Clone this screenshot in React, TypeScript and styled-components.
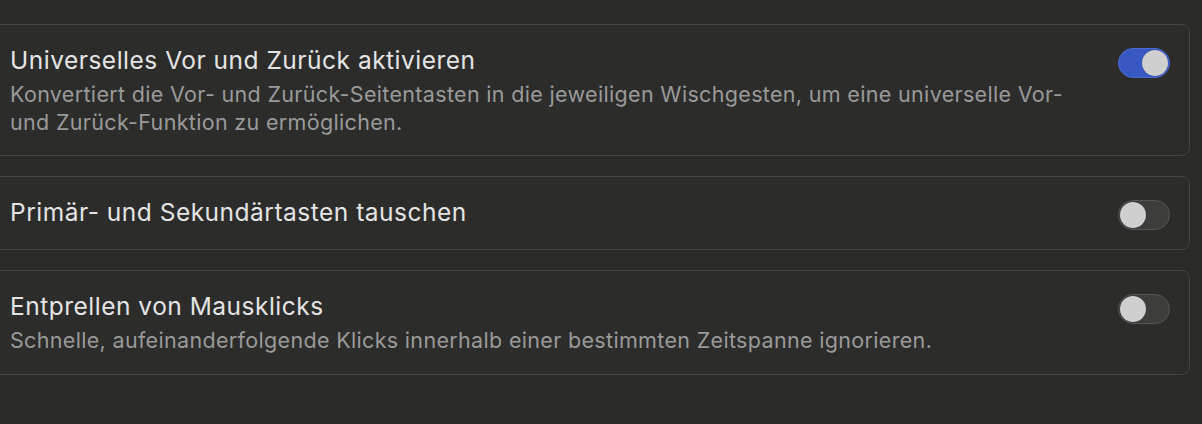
import React, { useState } from "react";
import styled, { createGlobalStyle } from "styled-components";

const Global = createGlobalStyle`
  html, body { margin: 0; padding: 0; background: #2a2a29; }
  body { font-family: Inter, "Noto Sans", "Liberation Sans", sans-serif; -webkit-font-smoothing: antialiased; }
`;

const Page = styled.div`
  width: 1202px;
  height: 424px;
  overflow: hidden;
  background: #2a2a29;
`;

const List = styled.div`
  display: flex;
  flex-direction: column;
  gap: 20px;
  margin-left: -11px;
  padding: 24px 12px 0 0;
`;

const Card = styled.div`
  display: flex;
  align-items: flex-start;
  gap: 48px;
  padding: 20px 19px 19px 20px;
  border: 1px solid #444443;
  border-radius: 8px;
  background: #2c2c2b;
`;

const TextCol = styled.div`
  flex: 1;
  min-width: 0;
`;

const Title = styled.div`
  font-size: 24.5px;
  line-height: 31px;
  color: #e4e4e4;
  letter-spacing: 0.5px;
`;

const Desc = styled.div`
  margin-top: 5px;
  font-size: 21.5px;
  line-height: 27.5px;
  color: #9a9a99;
  letter-spacing: 0.33px;
`;

const Track = styled.button<{ $on: boolean }>`
  flex: none;
  margin-top: 3px;
  position: relative;
  width: 52px;
  height: 30px;
  padding: 0;
  border-radius: 15px;
  border: 1px solid ${(p) => (p.$on ? "#4b6ad0" : "#555554")};
  background: ${(p) => (p.$on ? "#3858c4" : "#3d3d3c")};
  cursor: pointer;
`;

const Knob = styled.span<{ $on: boolean }>`
  position: absolute;
  top: 1px;
  left: ${(p) => (p.$on ? "23px" : "1px")};
  width: 26px;
  height: 26px;
  border-radius: 50%;
  background: #cfcfcf;
  box-shadow: 0 0 1px rgba(0, 0, 0, 0.4);
`;

function Toggle({ initial }: { initial: boolean }) {
  const [on, setOn] = useState(initial);
  return (
    <Track $on={on} onClick={() => setOn(!on)} aria-pressed={on}>
      <Knob $on={on} />
    </Track>
  );
}

const items = [
  {
    title: "Universelles Vor und Zurück aktivieren",
    desc: "Konvertiert die Vor- und Zurück-Seitentasten in die jeweiligen Wischgesten, um eine universelle Vor- und Zurück-Funktion zu ermöglichen.",
    on: true,
  },
  { title: "Primär- und Sekundärtasten tauschen", desc: "", on: false },
  {
    title: "Entprellen von Mausklicks",
    desc: "Schnelle, aufeinanderfolgende Klicks innerhalb einer bestimmten Zeitspanne ignorieren.",
    on: false,
  },
];

export default function App() {
  return (
    <Page>
      <Global />
      <List>
        {items.map((it) => (
          <Card key={it.title}>
            <TextCol>
              <Title>{it.title}</Title>
              {it.desc && <Desc>{it.desc}</Desc>}
            </TextCol>
            <Toggle initial={it.on} />
          </Card>
        ))}
      </List>
    </Page>
  );
}
